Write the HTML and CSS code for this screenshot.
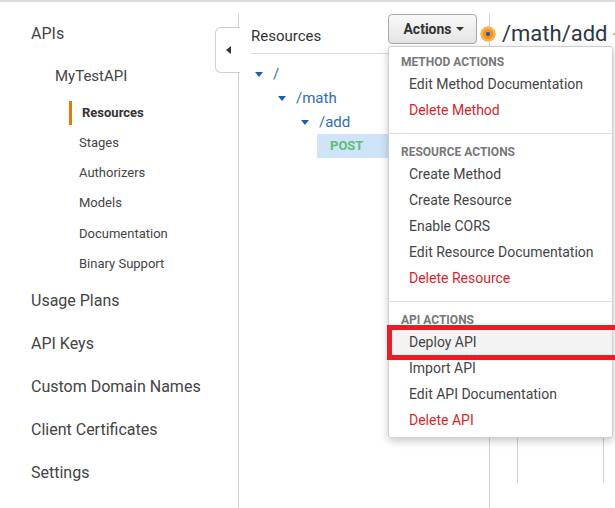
FILE: index.html
```html
<!DOCTYPE html>
<html lang="en">
<head>
<meta charset="utf-8">
<title>API Gateway - Resources</title>
<link rel="stylesheet" href="styles.css">
</head>
<body>
<div class="topbar"></div>
<div class="layout">
  <nav class="sidebar">
    <div class="nav-top">APIs</div>
    <div class="nav-api">MyTestAPI</div>
    <ul class="nav-sub">
      <li class="active">Resources</li>
      <li>Stages</li>
      <li>Authorizers</li>
      <li>Models</li>
      <li>Documentation</li>
      <li>Binary Support</li>
    </ul>
    <ul class="nav-main">
      <li>Usage Plans</li>
      <li>API Keys</li>
      <li>Custom Domain Names</li>
      <li>Client Certificates</li>
      <li>Settings</li>
    </ul>
  </nav>
  <div class="collapse-tab"><span class="arrow-left"></span></div>
  <section class="resources">
    <div class="res-header">
      <div class="res-title">Resources</div>
      <div class="actions">
        <button class="actions-btn">Actions<span class="caret-down"></span></button>
        <div class="dropdown">
          <div class="dd-section first">
            <div class="dd-head">Method Actions</div>
            <div class="dd-item">Edit Method Documentation</div>
            <div class="dd-item danger">Delete Method</div>
          </div>
          <div class="dd-section">
            <div class="dd-head">Resource Actions</div>
            <div class="dd-item">Create Method</div>
            <div class="dd-item">Create Resource</div>
            <div class="dd-item">Enable CORS</div>
            <div class="dd-item">Edit Resource Documentation</div>
            <div class="dd-item danger">Delete Resource</div>
          </div>
          <div class="dd-section last">
            <div class="dd-head">API Actions</div>
            <div class="dd-item hover marked">Deploy API</div>
            <div class="dd-item">Import API</div>
            <div class="dd-item">Edit API Documentation</div>
            <div class="dd-item danger">Delete API</div>
          </div>
        </div>
      </div>
    </div>
    <ul class="tree">
      <li class="node lvl1"><span class="tri"></span>/</li>
      <li class="node lvl2"><span class="tri"></span>/math</li>
      <li class="node lvl3"><span class="tri"></span>/add</li>
      <li class="method">POST</li>
    </ul>
  </section>
  <section class="detail">
    <span class="dot"></span>
    <div class="detail-title">/math/add <span class="dash">-</span></div>
    <div class="exec-box"></div>
  </section>
</div>
</body>
</html>
```
FILE: styles.css
```css
* { box-sizing: border-box; }
html, body { margin: 0; padding: 0; background: #fff; }
body {
  font-family: Roboto, "Noto Sans", "Liberation Sans", sans-serif;
  color: #444;
  width: 615px;
  height: 508px;
  overflow: hidden;
}
ul { list-style: none; margin: 0; padding: 0; }

.topbar { height: 2px; background: #dcdcdc; }

.layout {
  position: relative;
  display: flex;
  margin-top: 12px;
  height: 494px;
}

/* Sidebar */
.sidebar {
  width: 239px;
  flex: none;
  border-right: 1px solid #cfcfcf;
  padding-top: 10px;
}
.nav-top {
  padding-left: 31px;
  font-size: 16px;
  line-height: 20px;
  color: #444;
}
.nav-api {
  margin-top: 22px;
  padding-left: 55px;
  font-size: 15px;
  line-height: 20px;
  color: #444;
}
.nav-sub {
  margin-top: 15px;
  display: flex;
  flex-direction: column;
  gap: 6px;
}
.nav-sub li {
  font-size: 13px;
  line-height: 24px;
  padding-left: 79px;
  color: #444;
}
.nav-sub li:nth-child(n+5) { position: relative; top: 1px; }
.nav-sub li.active {
  font-weight: bold;
  color: #333;
  padding-left: 69px;
}
.nav-sub li.active::before {
  content: "";
  display: inline-block;
  width: 3px;
  height: 24px;
  background: #e8770c;
  vertical-align: top;
  margin-right: 10px;
}
.nav-main { margin-top: 4px; }
.nav-main li {
  font-size: 16px;
  line-height: 43px;
  padding-left: 31px;
  color: #444;
}

/* collapse tab */
.collapse-tab {
  position: absolute;
  left: 215px;
  top: 13px;
  width: 25px;
  height: 46px;
  background: #fff;
  border: 1px solid #cfcfcf;
  border-right: none;
  border-radius: 6px 0 0 6px;
  display: flex;
  align-items: center;
  padding-left: 10px;
  z-index: 2;
}
.arrow-left {
  width: 0; height: 0;
  border-top: 4px solid transparent;
  border-bottom: 4px solid transparent;
  border-right: 5px solid #333;
}

/* Resources panel */
.resources {
  width: 251px;
  flex: none;
  padding: 0 12px;
  border-right: 1px solid #cfcfcf;
}
.res-header {
  display: flex;
  justify-content: space-between;
  align-items: flex-start;
  height: 40px;
  border-bottom: 1px solid #dcdcdc;
}
.res-title {
  margin-top: 12px;
  font-size: 15px;
  line-height: 20px;
  color: #333;
}
.actions { position: relative; }
.actions-btn {
  display: flex;
  align-items: center;
  gap: 4px;
  width: 89px;
  height: 30px;
  justify-content: center;
  padding: 0 0 0 2px;
  font-family: inherit;
  font-size: 14px;
  font-weight: bold;
  color: #333;
  background: linear-gradient(#f9f9f9, #e4e4e4);
  border: 1px solid #a9a9a9;
  border-radius: 4px;
}
.caret-down {
  width: 0; height: 0;
  border-left: 4px solid transparent;
  border-right: 4px solid transparent;
  border-top: 4px solid #333;
}

.dropdown {
  position: absolute;
  left: 0;
  top: 32px;
  width: 225px;
  background: #fff;
  border: 1px solid #cfcfcf;
  border-radius: 3px;
  box-shadow: 0 3px 8px rgba(0,0,0,0.22);
  z-index: 5;
}
.dd-section {
  padding: 8px 0 10px;
  border-bottom: 1px solid #dedede;
}
.dd-section.first { padding-top: 5px; }
.dd-section.last { border-bottom: none; padding-bottom: 4px; }
.dd-head {
  padding: 2px 0 0 12px;
  font-size: 12px;
  line-height: 17px;
  font-weight: bold;
  text-transform: uppercase;
  color: #777;
}
.dd-item {
  position: relative;
  padding-left: 20px;
  font-size: 14px;
  line-height: 26px;
  color: #444;
}
.dd-item.danger { color: #d81f2a; }
.dd-item.hover { background: #f3f3f3; }
.dd-item.marked::after {
  content: "";
  position: absolute;
  left: -2px;
  right: -8px;
  top: -4px;
  bottom: -5px;
  border: 5px solid #ec1c24;
}

/* tree */
.tree { margin-top: 8px; }
.node {
  display: flex;
  align-items: center;
  height: 24px;
  font-size: 15px;
  color: #2f6db3;
}
.node.lvl1 { padding-left: 4px; }
.node.lvl2 { padding-left: 27px; }
.node.lvl3 { padding-left: 50px; }
.tri {
  width: 0; height: 0;
  border-left: 4px solid transparent;
  border-right: 4px solid transparent;
  border-top: 5px solid #1d5fb4;
  margin-right: 10px;
}
.method {
  margin-left: 66px;
  height: 24px;
  line-height: 24px;
  padding-left: 13px;
  background: #cfe4f8;
  font-size: 13px;
  font-weight: bold;
  color: #62bd73;
}

/* detail */
.detail {
  position: relative;
  flex: 1;
  padding-left: 12px;
}
.dot {
  position: absolute;
  left: -10px;
  top: 12px;
  width: 16px;
  height: 16px;
  border-radius: 50%;
  background: radial-gradient(circle, #1f5fb0 0 1.8px, #f7941d 2.4px 5px, #fbb450 5.6px 7.4px, rgba(251,180,80,0) 8px);
}
.detail-title {
  margin-top: 7px;
  font-size: 22px;
  line-height: 26px;
  color: #2c3744;
  white-space: nowrap;
}
.dash { color: #e8901f; }
.exec-box {
  margin-left: 15px;
  margin-top: 16px;
  width: 87px;
  height: 420px;
  border-left: 1px solid #cfcfcf;
  border-right: 1px solid #cfcfcf;
}
```
